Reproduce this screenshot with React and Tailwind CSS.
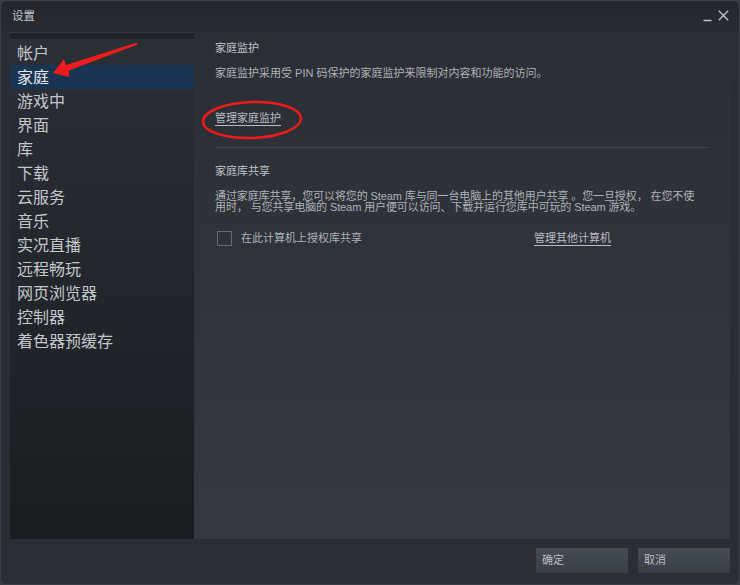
import React from "react";

const items = ["帐户", "家庭", "游戏中", "界面", "库", "下载", "云服务", "音乐", "实况直播", "远程畅玩", "网页浏览器", "控制器", "着色器预缓存"];

export default function App() {
  const font = { fontFamily: '"Liberation Sans", "Noto Sans CJK SC", sans-serif' };
  return (
    <div className="w-[740px] h-[585px] bg-[#3a3d44]" style={font}>
      <div className="relative w-[740px] h-[585px] bg-[#2a2d33] rounded-[7px] border border-[#3b3f46] overflow-hidden flex flex-col">
        {/* title bar */}
        <div className="h-[31px] shrink-0 flex items-center justify-between pl-[11px] pr-[10px] bg-gradient-to-b from-[#24272c] to-[#282b31]">
          <span className="text-[11.5px] leading-[14px] text-[#c2c6cb] -mt-[2px]">设置</span>
          <div className="flex items-center gap-[6px] -mt-[2px]">
            <svg width="9" height="12" viewBox="0 0 9 12"><path d="M0.5 10.5 H8.5" stroke="#c2c6cb" strokeWidth="1.3" /></svg>
            <svg width="11" height="11" viewBox="0 0 11 11"><path d="M0.8 0.8 L10.2 10.2 M10.2 0.8 L0.8 10.2" stroke="#c2c6cb" strokeWidth="1.3" /></svg>
          </div>
        </div>
        {/* middle */}
        <div className="flex h-[507px] px-[9px] shrink-0">
          <div className="w-[184px] flex flex-col bg-gradient-to-b from-[#2b2f36] to-[#1a1d20]">
            <div className="h-[7px] bg-[#1f2227] border-t border-[#353941]" />
            <div className="flex flex-col pt-[2px]">
              {items.map((t) => (
                <div
                  key={t}
                  className={
                    "h-[24px] leading-[26px] pl-[7px] text-[16px] whitespace-nowrap " +
                    (t === "家庭" ? "bg-[#1a3554] text-[#e4e7ea]" : "text-[#c3c7cc]")
                  }
                >
                  {t}
                </div>
              ))}
            </div>
          </div>
          <div className="flex-1 bg-gradient-to-b from-[#2b2e35] to-[#353941] pl-[21px] pr-[21px] pt-[8px] flex flex-col text-[11px]">
            <div className="leading-[16px] text-[#bfc3c8]">家庭监护</div>
            <div className="mt-[9px] leading-[16px] text-[#aeb2b7] whitespace-nowrap">家庭监护采用受 PIN 码保护的家庭监护来限制对内容和功能的访问。</div>
            <div className="mt-[29px] leading-[16px]">
              <span className="text-[#b9bdc2] underline underline-offset-[3px]">管理家庭监护</span>
            </div>
            <div className="mt-[21px] h-px bg-[#42464d]" />
            <div className="mt-[15px] leading-[16px] text-[#bfc3c8]">家庭库共享</div>
            <div className="mt-[12px] leading-[11px] text-[#aeb2b7] whitespace-nowrap tracking-[-0.1px]">
              通过家庭库共享，您可以将您的 Steam 库与同一台电脑上的其他用户共享 。您一旦授权， 在您不使
              <br />
              用时， 与您共享电脑的 Steam 用户便可以访问、下载并运行您库中可玩的 Steam 游戏。
            </div>
            <div className="mt-[17px] flex items-center h-[16px]">
              <div className="ml-[2px] w-[15px] h-[15px] border border-[#676b71]" />
              <span className="ml-[9px] leading-[16px] text-[#aeb2b7]">在此计算机上授权库共享</span>
              <span className="ml-[172px] leading-[16px] text-[#b9bdc2] underline underline-offset-[3px]">管理其他计算机</span>
            </div>
          </div>
        </div>
        {/* footer */}
        <div className="flex-1 flex justify-end items-start pt-[9px] pr-[9px] gap-[10px]">
          <button className="w-[92px] h-[25px] text-left pl-[6px] text-[11px] text-[#b9bdc3] bg-gradient-to-b from-[#464b54] to-[#393e46]">确定</button>
          <button className="w-[92px] h-[25px] text-left pl-[6px] text-[11px] text-[#b9bdc3] bg-gradient-to-b from-[#464b54] to-[#393e46]">取消</button>
        </div>
        {/* annotations */}
        <svg className="absolute left-0 top-0 pointer-events-none" width="740" height="585" viewBox="0 0 740 585">
          <polygon points="52,72 63,58 65,64 136,41.5 136.5,43.5 68,69.5 68,76" fill="#ee1c1c" />
          <ellipse cx="251" cy="119" rx="49" ry="18" fill="none" stroke="#ee1c1c" strokeWidth="2.5" transform="rotate(-2 251 119)" />
        </svg>
      </div>
    </div>
  );
}
